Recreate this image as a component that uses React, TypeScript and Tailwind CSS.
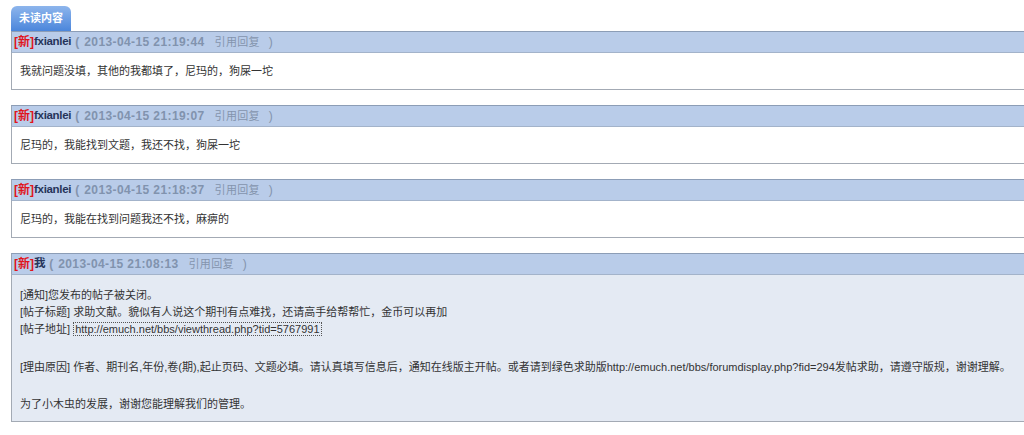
const FONT = "font-['Tahoma','Liberation_Sans','Noto_Sans_CJK_SC',sans-serif]";

type Post = {
  author: string;
  time: string;
  lines: string[];
};

const POSTS: Post[] = [
  { author: "fxianlei", time: "2013-04-15 21:19:44", lines: ["我就问题没填，其他的我都填了，尼玛的，狗屎一坨"] },
  { author: "fxianlei", time: "2013-04-15 21:19:07", lines: ["尼玛的，我能找到文题，我还不找，狗屎一坨"] },
  { author: "fxianlei", time: "2013-04-15 21:18:37", lines: ["尼玛的，我能在找到问题我还不找，麻痹的"] },
];

function PostHeader({ author, time }: { author: string; time: string }) {
  return (
    <div className="h-[22px] flex items-center pl-[2px] bg-[#b9cce9] border-t border-t-[#8c9db6] border-l border-l-[#9aa6b6] border-b border-b-[#a3b3ca] text-[12px] font-bold whitespace-nowrap">
      <span className="text-[#e0141b]">[新]</span>
      <span className="text-[#26345a] text-[11.5px] tracking-[-0.3px]">{author}</span>
      <span className="text-[#8494ad] ml-[4px]">(</span>
      <span className="text-[#8193ae] ml-[5px] text-[12px] tracking-[0.4px]">{time}</span>
      <span className="text-[#8494ad] ml-[10px] font-normal text-[11px] tracking-[0.3px]">引用回复</span>
      <span className="text-[#8494ad] ml-[9px] font-normal">)</span>
    </div>
  );
}

function SimplePost({ post }: { post: Post }) {
  return (
    <div className="ml-[11px]">
      <PostHeader author={post.author} time={post.time} />
      <div className="h-[37px] bg-white border-l border-l-[#a3aab4] border-b border-b-[#a3aab4] flex items-center pl-[8px] text-[11px] text-[#333]">
        {post.lines[0]}
      </div>
    </div>
  );
}

export default function App() {
  return (
    <div className={`${FONT} w-[1024px] h-[435px] bg-white overflow-hidden pt-[6px]`}>
      <div className="ml-[11px] w-[60px] h-[25px] rounded-t-[6px] bg-gradient-to-b from-[#8db5ec] to-[#4b86db] flex items-center justify-center text-white text-[11px] font-bold">
        未读内容
      </div>
      <div className="flex flex-col gap-[15px]">
        {POSTS.map((p, i) => (
          <SimplePost key={i} post={p} />
        ))}
        <div className="ml-[11px]">
          <PostHeader author="我" time="2013-04-15 21:08:13" />
          <div className="h-[147px] bg-[#e4eaf3] border-l border-l-[#a3aab4] border-b border-b-[#a3aab4] pl-[8px] pt-[12px] text-[11px] text-[#333] leading-[17px] whitespace-nowrap">
            <div>[通知]您发布的帖子被关闭。</div>
            <div>[帖子标题] 求助文献。貌似有人说这个期刊有点难找，还请高手给帮帮忙，金币可以再加</div>
            <div>
              [帖子地址]{" "}
              <span className="border border-dotted border-[#555] px-[1px]">http://emuch.net/bbs/viewthread.php?tid=5767991</span>
            </div>
            <div className="h-[21px]" />
            <div>
              [理由原因] 作者、期刊名,年份,卷(期),起止页码、文题必填。请认真填写信息后，通知在线版主开帖。或者请到绿色求助版http://emuch.net/bbs/forumdisplay.php?fid=294发帖求助，请遵守版规，谢谢理解。
            </div>
            <div className="h-[20px]" />
            <div>为了小木虫的发展，谢谢您能理解我们的管理。</div>
          </div>
        </div>
      </div>
    </div>
  );
}
